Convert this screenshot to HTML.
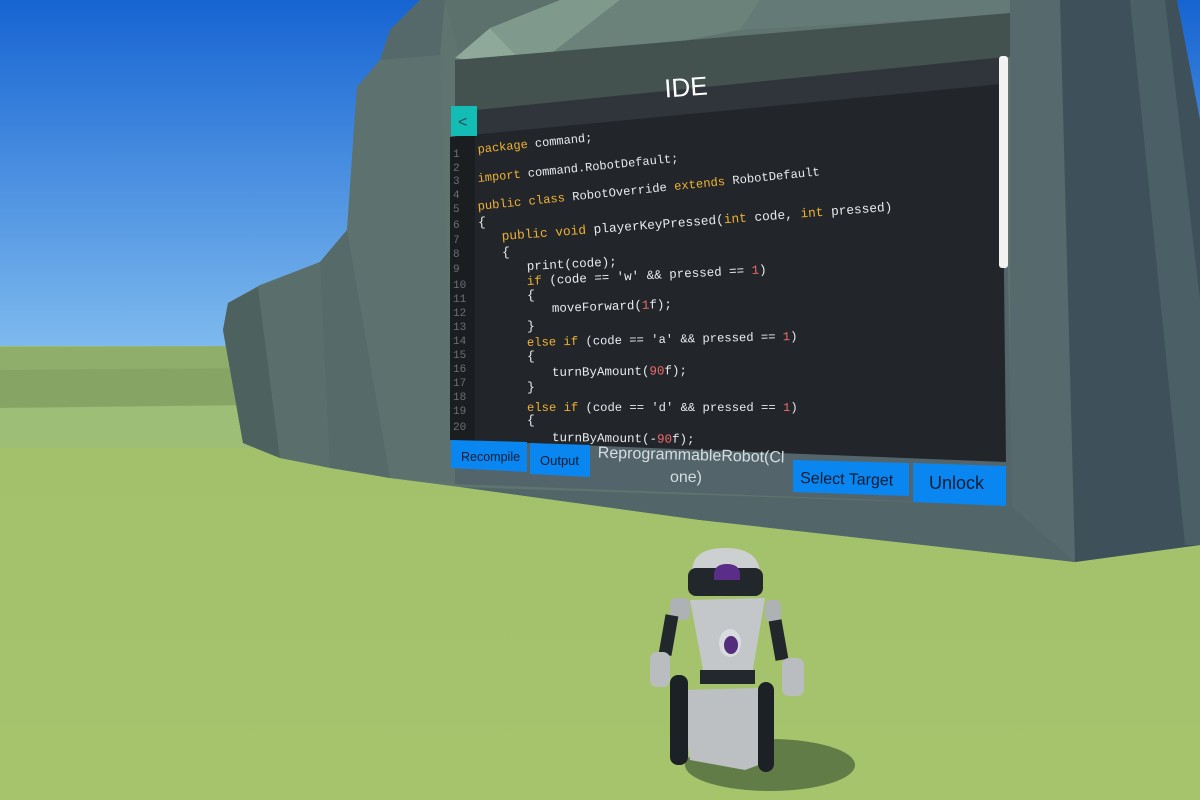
<!DOCTYPE html>
<html><head><meta charset="utf-8"><style>
html,body{margin:0;padding:0;width:1200px;height:800px;overflow:hidden;background:#3a86e0}
svg{display:block}
.c{font-family:"Liberation Mono",monospace;fill:#e8eaec}
.k{fill:#f0b232}.n{fill:#f06a6a}.g{fill:#6a6f76;font-family:"Liberation Mono",monospace;font-size:11px}
.b{font-family:"Liberation Sans",sans-serif;fill:#0b1d33}
</style></head><body>
<svg width="1200" height="800" viewBox="0 0 1200 800" xmlns="http://www.w3.org/2000/svg">
<defs>
<linearGradient id="sky" x1="0" y1="0" x2="0" y2="1"><stop offset="0" stop-color="#1664d2"/><stop offset="1" stop-color="#7ebaee"/></linearGradient>
<linearGradient id="gr" x1="0" y1="0" x2="0" y2="1"><stop offset="0" stop-color="#a2c06a"/><stop offset="1" stop-color="#a6c46c"/></linearGradient>
</defs>
<rect width="1200" height="348" fill="url(#sky)"/>
<rect y="346" width="1200" height="454" fill="url(#gr)"/>
<path d="M0 347 L260 346 L260 372 L0 372Z" fill="#8fae6c"/>
<path d="M0 370 L260 368 L260 410 L0 410Z" fill="#86a564"/>
<path d="M0 408 L260 405 L260 448 L0 448Z" fill="#9cbe76"/>
<!-- rock -->
<path d="M223 330 L228 303 L260 285 L320 262 L347 230 L357 87 L380 60 L390 30 L420 0 L1177 0 L1200 120 L1200 545 L1075 562 L700 520 L460 487 L390 478 L280 458 L243 443Z" fill="#5f736f"/>
<path d="M223 330 L228 303 L258 287 L280 458 L243 443Z" fill="#4d615f"/>
<path d="M258 287 L320 262 L330 468 L280 458Z" fill="#5a6f6c"/>
<path d="M320 262 L347 230 L365 232 L390 478 L330 468Z" fill="#566b69"/>
<path d="M347 230 L357 87 L380 60 L440 55 L455 482 L390 478Z" fill="#5d716e"/>
<path d="M380 60 L390 30 L420 0 L445 0 L440 55Z" fill="#56696a"/>
<path d="M445 0 L620 0 L530 70 L460 58Z" fill="#5c706c"/>
<path d="M455 58 L490 28 L530 70Z" fill="#8ea89a"/>
<path d="M490 28 L560 0 L620 0 L530 70Z" fill="#7f998c"/>
<path d="M530 70 L620 0 L760 0 L740 30Z" fill="#6b827b"/>
<path d="M760 0 L1010 0 L1010 15 L740 30Z" fill="#647a76"/>
<path d="M1010 0 L1060 0 L1075 562 L1010 510Z" fill="#56696c"/>
<path d="M1060 0 L1177 0 L1200 120 L1200 545 L1075 562Z" fill="#3e515a"/>
<path d="M1130 0 L1165 0 L1200 300 L1200 545 L1185 545Z" fill="#4b5f66"/>
<path d="M460 487 L1010 505 L1075 562 L700 520Z" fill="#52666a"/>
<!-- frame -->
<path d="M455 60 L1010 13 L1010 57 L455 112Z" fill="#43514f"/>
<path d="M455 112 L1005 57 L1005 85 L455 137Z" fill="#30353b"/>
<path d="M455 137 L1005 85 L1012 505 L455 484Z" fill="#53656a"/>
<text x="686" y="96" font-family="Liberation Sans,sans-serif" font-size="26" fill="#fff" text-anchor="middle" transform="rotate(-4 686 88)">IDE</text>
<path d="M450 137 L1002 84 L1006 462 L450 440Z" fill="#22262a"/>
<path d="M450 137 L475 135 L475 441 L450 440Z" fill="#1b1e21"/>
<rect x="451" y="106" width="26" height="30" fill="#13bdb6"/>
<text x="458" y="127" font-family="Liberation Sans,sans-serif" font-size="16" fill="#2a4c56">&lt;</text>
<rect x="999" y="56" width="9" height="212" rx="3" fill="#f2f2f2"/>
<g class="g">
<text x="453" y="157">1</text><text x="453" y="171">2</text><text x="453" y="184">3</text><text x="453" y="198">4</text><text x="453" y="212">5</text><text x="453" y="228">6</text><text x="453" y="243">7</text><text x="453" y="257">8</text><text x="453" y="272">9</text><text x="453" y="288">10</text><text x="453" y="302">11</text><text x="453" y="316">12</text><text x="453" y="330">13</text><text x="453" y="344">14</text><text x="453" y="358">15</text><text x="453" y="372">16</text><text x="453" y="386">17</text><text x="453" y="400">18</text><text x="453" y="414">19</text><text x="453" y="430">20</text>
</g>
<g class="c">
<text x="478" y="153" font-size="12" transform="rotate(-6 478 153)"><tspan class="k">package</tspan> command;</text>
<text x="478" y="182" font-size="12" transform="rotate(-5.8 478 182)"><tspan class="k">import</tspan> command.RobotDefault;</text>
<text x="478" y="210" font-size="12.2" transform="rotate(-5.8 478 210)"><tspan class="k">public class</tspan> RobotOverride <tspan class="k">extends</tspan> RobotDefault</text>
<text x="478" y="226" font-size="13">{</text>
<text x="502" y="240" font-size="12.8" transform="rotate(-4.3 502 240)"><tspan class="k">public void</tspan> playerKeyPressed(<tspan class="k">int</tspan> code, <tspan class="k">int</tspan> pressed)</text>
<text x="502" y="256" font-size="13">{</text>
<text x="527" y="270" font-size="12.5" transform="rotate(-3 527 270)">print(code);</text>
<text x="527" y="285" font-size="12.5" transform="rotate(-2.8 527 285)"><tspan class="k">if</tspan> (code == 'w' &amp;&amp; pressed == <tspan class="n">1</tspan>)</text>
<text x="527" y="299" font-size="13">{</text>
<text x="552" y="312" font-size="12.5" transform="rotate(-2 552 312)">moveForward(<tspan class="n">1</tspan>f);</text>
<text x="527" y="330" font-size="13">}</text>
<text x="527" y="346" font-size="12.2" transform="rotate(-1.3 527 346)"><tspan class="k">else if</tspan> (code == 'a' &amp;&amp; pressed == <tspan class="n">1</tspan>)</text>
<text x="527" y="360" font-size="13">{</text>
<text x="552" y="376" font-size="12.5" transform="rotate(-0.8 552 376)">turnByAmount(<tspan class="n">90</tspan>f);</text>
<text x="527" y="391" font-size="13">}</text>
<text x="527" y="411" font-size="12.2"><tspan class="k">else if</tspan> (code == 'd' &amp;&amp; pressed == <tspan class="n">1</tspan>)</text>
<text x="527" y="424" font-size="13">{</text>
<text x="552" y="441" font-size="12.5" transform="rotate(0.8 552 441)">turnByAmount(-<tspan class="n">90</tspan>f);</text>
</g>
<path d="M451 440 L527 442 L527 472 L451 468Z" fill="#0a86f0"/>
<text x="461" y="461" class="b" font-size="12.5">Recompile</text>
<path d="M530 443 L590 445 L590 477 L530 474Z" fill="#0a86f0"/>
<text x="540" y="465" class="b" font-size="13">Output</text>
<text x="691" y="460" font-family="Liberation Sans,sans-serif" font-size="16" fill="#d6dde2" text-anchor="middle" transform="rotate(1.5 691 460)">ReprogrammableRobot(Cl</text>
<text x="686" y="482" font-family="Liberation Sans,sans-serif" font-size="16" fill="#d6dde2" text-anchor="middle">one)</text>
<path d="M793 460 L909 463 L909 496 L793 492Z" fill="#0a86f0"/>
<text x="800" y="483" class="b" font-size="16" transform="rotate(1.5 800 483)">Select Target</text>
<path d="M913 463 L1006 466 L1006 506 L913 502Z" fill="#0a86f0"/>
<text x="929" y="489" class="b" font-size="18">Unlock</text>
<!-- robot -->
<ellipse cx="770" cy="765" rx="85" ry="26" fill="#627c48"/>
<path d="M680 690 L760 688 L772 760 L745 770 L690 760Z" fill="#bcc0c3"/>
<rect x="670" y="675" width="18" height="90" rx="8" fill="#1c2126"/>
<rect x="758" y="682" width="16" height="90" rx="8" fill="#1c2126"/>
<path d="M690 600 L765 598 L752 675 L705 680Z" fill="#c3c7c9"/>
<rect x="700" y="670" width="55" height="14" fill="#23282d"/>
<ellipse cx="730" cy="643" rx="11" ry="14" fill="#d8dcde"/>
<ellipse cx="731" cy="645" rx="7" ry="9" fill="#542d7c"/>
<path d="M692 572 Q692 548 725 548 Q758 548 760 572Z" fill="#cdd0d1"/>
<rect x="688" y="568" width="75" height="28" rx="8" fill="#22272c"/>
<path d="M714 575 Q714 564 727 564 Q740 564 740 575 L740 580 L714 580Z" fill="#5a2e88"/>
<rect x="670" y="598" width="20" height="22" rx="6" fill="#aeb2b4"/>
<rect x="662" y="615" width="13" height="40" fill="#22272c" transform="rotate(10 668 635)"/>
<rect x="650" y="652" width="20" height="35" rx="7" fill="#b9bdc0"/>
<rect x="765" y="600" width="16" height="22" rx="6" fill="#aeb2b4"/>
<rect x="772" y="620" width="13" height="40" fill="#22272c" transform="rotate(-10 779 640)"/>
<rect x="782" y="658" width="22" height="38" rx="7" fill="#b9bdc0"/>
</svg>
</body></html>
